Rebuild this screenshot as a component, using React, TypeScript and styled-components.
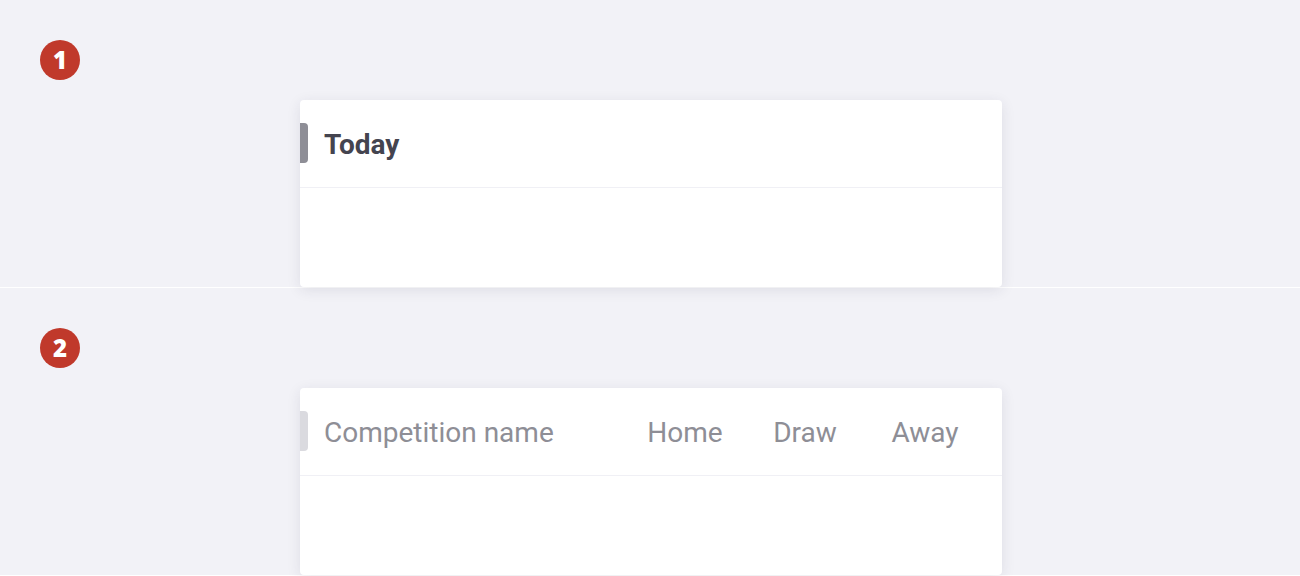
import React from 'react';
import styled, { createGlobalStyle } from 'styled-components';

const GlobalStyle = createGlobalStyle`
  html, body {
    margin: 0;
    padding: 0;
    background: #f2f2f7;
    font-family: Roboto, "Liberation Sans", sans-serif;
  }
`;

const Page = styled.div`
  width: 1300px;
  height: 576px;
  overflow: hidden;
  background: #f2f2f7;
`;

const Section = styled.section`
  height: 288px;
  box-sizing: border-box;
  padding: 40px 0 0 40px;
  border-bottom: 1px solid #ffffff;
  display: flex;
  flex-direction: column;
`;

const Badge = styled.div`
  width: 40px;
  height: 40px;
  border-radius: 50%;
  background: #c0392b;
  color: #ffffff;
  font-family: "Open Sans", Roboto, sans-serif;
  font-weight: 800;
  font-size: 24px;
  display: flex;
  align-items: center;
  justify-content: center;
  margin-bottom: 20px;
`;

const Card = styled.div`
  align-self: flex-start;
  margin-left: 260px;
  width: 702px;
  height: 188px;
  background: #ffffff;
  border-radius: 4px;
  box-shadow: 0 3px 14px rgba(40, 40, 70, 0.1);
  display: flex;
  flex-direction: column;
  position: relative;
  z-index: 1;
`;

const Header = styled.div`
  height: 87px;
  border-bottom: 1px solid #f0f0f5;
  display: flex;
  align-items: center;
  padding-right: 17px;
`;

const Marker = styled.span<{ $light?: boolean }>`
  width: 8px;
  height: 40px;
  border-radius: 0 4px 4px 0;
  background: ${p => (p.$light ? '#dadadf' : '#8e8e96')};
  margin-right: 16px;
  flex-shrink: 0;
`;

const Title = styled.span<{ $muted?: boolean }>`
  flex: 1;
  padding-top: 2px;
  font-size: 28px;
  font-weight: ${p => (p.$muted ? 400 : 700)};
  color: ${p => (p.$muted ? '#8e8e96' : '#44444f')};
`;

const Col = styled.span`
  width: 120px;
  padding-top: 2px;
  text-align: center;
  font-size: 28px;
  color: #8e8e96;
`;

const Body = styled.div`
  flex: 1;
`;

export default function App() {
  return (
    <Page>
      <GlobalStyle />
      <Section>
        <Badge>1</Badge>
        <Card>
          <Header>
            <Marker />
            <Title>Today</Title>
          </Header>
          <Body />
        </Card>
      </Section>
      <Section>
        <Badge>2</Badge>
        <Card>
          <Header>
            <Marker $light />
            <Title $muted>Competition name</Title>
            <Col>Home</Col>
            <Col>Draw</Col>
            <Col>Away</Col>
          </Header>
          <Body />
        </Card>
      </Section>
    </Page>
  );
}
